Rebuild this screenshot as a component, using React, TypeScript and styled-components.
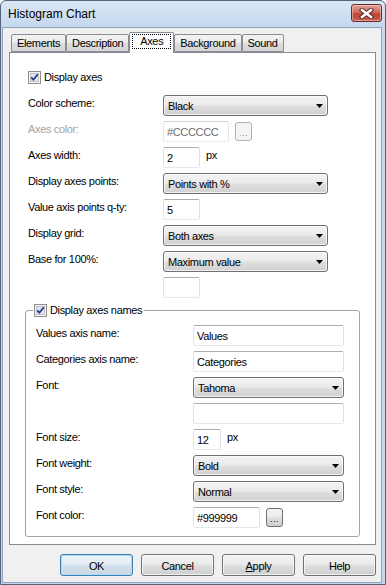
import React from 'react'
import styled, { createGlobalStyle } from 'styled-components'

const FONT = `'Liberation Sans', Arial, sans-serif`

const GlobalStyle = createGlobalStyle`
  html, body {
    margin: 0;
    padding: 0;
    background: #fff;
  }
  body {
    font-family: ${FONT};
    font-size: 11px;
    letter-spacing: -0.35px;
    color: #000;
  }
  * {
    box-sizing: border-box;
  }
`

type Field =
  | { kind: 'select'; label: string; value: string }
  | { kind: 'text'; label: string; value: string; width: number; unit?: string; browse?: boolean; disabled?: boolean }

const axesFields: Field[] = [
  { kind: 'select', label: 'Color scheme:', value: 'Black' },
  { kind: 'text', label: 'Axes color:', value: '#CCCCCC', width: 66, browse: true, disabled: true },
  { kind: 'text', label: 'Axes width:', value: '2', width: 37, unit: 'px' },
  { kind: 'select', label: 'Display axes points:', value: 'Points with %' },
  { kind: 'text', label: 'Value axis points q-ty:', value: '5', width: 37 },
  { kind: 'select', label: 'Display grid:', value: 'Both axes' },
  { kind: 'select', label: 'Base for 100%:', value: 'Maximum value' },
  { kind: 'text', label: '', value: '', width: 37 },
]

const nameFields: Field[] = [
  { kind: 'text', label: 'Values axis name:', value: 'Values', width: 151 },
  { kind: 'text', label: 'Categories axis name:', value: 'Categories', width: 151 },
  { kind: 'select', label: 'Font:', value: 'Tahoma' },
  { kind: 'text', label: '', value: '', width: 151 },
  { kind: 'text', label: 'Font size:', value: '12', width: 28, unit: 'px' },
  { kind: 'select', label: 'Font weight:', value: 'Bold' },
  { kind: 'select', label: 'Font style:', value: 'Normal' },
  { kind: 'text', label: 'Font color:', value: '#999999', width: 67, browse: true },
]

const tabs = ['Elements', 'Description', 'Axes', 'Background', 'Sound']

const WINDOW = styled.div`
  width: 386px;
  height: 585px;
  display: flex;
  flex-direction: column;
  padding: 0 3px 1px 1px;
  border: 1px solid #55647c;
  border-radius: 6px 6px 0 0;
  background: linear-gradient(#dae6f5, #c5d8ef 26px, #c3d6ee);
`

const TITLE_BAR = styled.div`
  height: 26px;
  flex: none;
  display: flex;
  align-items: center;
  justify-content: space-between;
  padding: 0 0 1px 6px;
`

const TITLE = styled.span`
  font-family: ${FONT};
  font-size: 12px;
  letter-spacing: 0;
  color: #000;
`

const CLOSE_BUTTON = styled.div`
  width: 31px;
  height: 18px;
  margin-top: -1px;
  display: flex;
  align-items: center;
  justify-content: center;
  border: 1px solid #6b2b28;
  border-radius: 3px;
  background: linear-gradient(#e3a59d, #cf6a5f 45%, #bd4536 55%, #c65d4f);
  box-shadow: inset 0 0 0 1px rgba(255, 210, 200, 0.55);
`

const CLIENT = styled.div`
  flex: 1;
  display: flex;
  flex-direction: column;
  padding: 4px 5px 6px 6px;
  border: 1px solid #8ea4c0;
  background: #f0f0f0;
`

const TAB_STRIP = styled.div`
  display: flex;
  align-items: flex-end;
  height: 20px;
  padding-left: 2px;
  position: relative;
  z-index: 1;
`

const TAB = styled.div<{ $active?: boolean }>`
  height: ${({ $active }) => ($active ? 21 : 18)}px;
  margin: ${({ $active }) => ($active ? '0 0 -1px 0' : '0')};
  padding: ${({ $active }) => ($active ? '1px 2px 0' : '0 5px')};
  border: 1px solid #898c95;
  border-bottom: ${({ $active }) => ($active ? 'none' : '1px solid #898c95')};
  border-radius: 2px 2px 0 0;
  background: ${({ $active }) => ($active ? '#fff' : 'linear-gradient(#f3f3f3, #ebebeb 50%, #dddddd 50%, #d6d6d6)')};
  line-height: 16px;
  white-space: nowrap;
`

const FOCUS_TEXT = styled.span`
  display: block;
  padding: 0 8px;
  line-height: 15px;
  outline: 1px dotted #000;
  outline-offset: -1px;
`

const PANEL = styled.div`
  flex: 1;
  display: flex;
  flex-direction: column;
  padding: 17px 15px 5px 15px;
  border: 1px solid #898c95;
  background: #fff;
`

const SECTION = styled.div`
  display: flex;
  flex-direction: column;
  padding-left: 3px;
`

const CHECK_ROW = styled.label`
  display: flex;
  align-items: center;
  gap: 3px;
  height: 14px;
  line-height: 14px;
  white-space: nowrap;
`

const ROWS = styled.div<{ $top: number }>`
  display: flex;
  flex-direction: column;
  gap: 5px;
  margin-top: ${({ $top }) => $top}px;
`

const ROW = styled.div<{ $labelWidth: number }>`
  display: grid;
  grid-template-columns: ${({ $labelWidth }) => $labelWidth}px 1fr;
  height: 21px;
`

const LABEL = styled.span<{ $disabled?: boolean }>`
  padding-top: 2px;
  line-height: 13px;
  white-space: nowrap;
  color: ${({ $disabled }) => ($disabled ? '#a3a3a3' : '#000')};
`

const CONTROL = styled.div`
  display: flex;
  align-items: center;
  gap: 6px;
`

const SELECT = styled.div<{ $width: number }>`
  width: ${({ $width }) => $width}px;
  height: 21px;
  display: flex;
  align-items: center;
  justify-content: space-between;
  padding: 1px 4px 0 4px;
  border: 1px solid #707070;
  border-radius: 3px;
  background: linear-gradient(#f3f3f3, #ebebeb 45%, #dedede 55%, #d0d0d0);
  box-shadow: inset 0 0 0 1px rgba(255, 255, 255, 0.7);
  line-height: 18px;
  white-space: nowrap;
`

const TEXT_BOX = styled.div<{ $width: number; $disabled?: boolean }>`
  width: ${({ $width }) => $width}px;
  height: 21px;
  padding: 1px 3px 0;
  border: 1px solid;
  border-color: ${({ $disabled }) =>
    $disabled ? '#d2d4d8 #e6e8ec #eceef1 #e6e8ec' : '#abadb3 #dbdfe6 #e3e9ef #e2e3ea'};
  border-radius: 2px;
  background: #fff;
  color: ${({ $disabled }) => ($disabled ? '#6d6d6d' : '#000')};
  line-height: 18px;
  white-space: nowrap;
`

const UNIT = styled.span`
  line-height: 13px;
  margin-top: -4px;
`

const BROWSE_BUTTON = styled.div<{ $disabled?: boolean }>`
  width: 17px;
  height: 19px;
  display: flex;
  align-items: flex-end;
  justify-content: center;
  padding-bottom: 3px;
  border: 1px solid ${({ $disabled }) => ($disabled ? '#b0b4b8' : '#707070')};
  border-radius: 3px;
  background: ${({ $disabled }) =>
    $disabled ? '#f4f4f4' : 'linear-gradient(#f3f3f3, #ebebeb 45%, #dddddd 55%, #cfcfcf)'};
  color: ${({ $disabled }) => ($disabled ? '#8d8d8d' : '#000')};
  font-size: 9px;
  line-height: 8px;
  letter-spacing: 0.5px;
`

const GROUP_BOX = styled.fieldset`
  margin: 5px 0 0 0;
  padding: 0 16px 8px 10px;
  min-inline-size: 0;
  border: 1px solid #a5a5a5;
  border-radius: 3px;
`

const LEGEND = styled.legend`
  margin-left: -3px;
  padding: 0 2px 0 1px;
`

const BUTTON_BAR = styled.div`
  display: flex;
  justify-content: flex-end;
  gap: 8px;
  margin-top: 9px;
`

const DIALOG_BUTTON = styled.div<{ $default?: boolean }>`
  width: 73px;
  height: 22px;
  display: flex;
  align-items: center;
  justify-content: center;
  border: 1px solid ${({ $default }) => ($default ? '#3c7fb1' : '#707070')};
  border-radius: 3px;
  background: ${({ $default }) =>
    $default
      ? 'linear-gradient(#eef4f8, #e4edf4 45%, #d3e0ea 55%, #c9d8e4)'
      : 'linear-gradient(#f3f3f3, #ebebeb 45%, #dddddd 55%, #cfcfcf)'};
  box-shadow: inset 0 0 0 1px ${({ $default }) => ($default ? '#a9dcf6' : 'rgba(255, 255, 255, 0.7)')};
  padding-top: 1px;
`

const CheckBox = () => (
  <svg width="13" height="13" viewBox="0 0 13 13">
    <rect x="0.5" y="0.5" width="12" height="12" fill="#f4f4f4" stroke="#8e8f8f" />
    <rect x="2.5" y="2.5" width="8" height="8" fill="#e2e4e8" stroke="#c3c7cd" />
    <path d="M3.2 6.3 L5.4 8.7 L9.8 3.2" fill="none" stroke="#263b8c" strokeWidth="1.8" />
  </svg>
)

const ArrowDown = () => (
  <svg width="7" height="4" viewBox="0 0 7 4">
    <polygon points="0,0 7,0 3.5,4" fill="#000" />
  </svg>
)

const CloseGlyph = () => (
  <svg width="15" height="11" viewBox="0 0 15 11">
    <path d="M3 2 L12 9 M12 2 L3 9" stroke="#5a2a26" strokeWidth="4.4" strokeLinecap="square" />
    <path d="M3 2 L12 9 M12 2 L3 9" stroke="#fff" strokeWidth="2.4" strokeLinecap="square" />
  </svg>
)

const FieldRow = ({ field, labelWidth, selectWidth }: { field: Field; labelWidth: number; selectWidth: number }) => {
  const disabled = field.kind === 'text' && field.disabled
  return (
    <ROW $labelWidth={labelWidth}>
      <LABEL $disabled={disabled}>{field.label}</LABEL>
      <CONTROL>
        {field.kind === 'select' ? (
          <SELECT $width={selectWidth}>
            <span>{field.value}</span>
            <ArrowDown />
          </SELECT>
        ) : (
          <>
            <TEXT_BOX $width={field.width} $disabled={disabled}>
              {field.value}
            </TEXT_BOX>
            {field.unit && <UNIT>{field.unit}</UNIT>}
            {field.browse && <BROWSE_BUTTON $disabled={disabled}>...</BROWSE_BUTTON>}
          </>
        )}
      </CONTROL>
    </ROW>
  )
}

export default function App() {
  return (
    <>
      <GlobalStyle />
      <WINDOW>
        <TITLE_BAR>
          <TITLE>Histogram Chart</TITLE>
          <CLOSE_BUTTON>
            <CloseGlyph />
          </CLOSE_BUTTON>
        </TITLE_BAR>
        <CLIENT>
          <TAB_STRIP>
            {tabs.map((t) => (
              <TAB key={t} $active={t === 'Axes'}>
                {t === 'Axes' ? <FOCUS_TEXT>{t}</FOCUS_TEXT> : t}
              </TAB>
            ))}
          </TAB_STRIP>
          <PANEL>
            <SECTION>
              <CHECK_ROW>
                <CheckBox />
                Display axes
              </CHECK_ROW>
              <ROWS $top={11}>
                {axesFields.map((f, i) => (
                  <FieldRow key={i} field={f} labelWidth={135} selectWidth={165} />
                ))}
              </ROWS>
            </SECTION>
            <GROUP_BOX>
              <LEGEND>
                <CHECK_ROW>
                  <CheckBox />
                  Display axes names
                </CHECK_ROW>
              </LEGEND>
              <ROWS $top={8}>
                {nameFields.map((f, i) => (
                  <FieldRow key={i} field={f} labelWidth={157} selectWidth={151} />
                ))}
              </ROWS>
            </GROUP_BOX>
          </PANEL>
          <BUTTON_BAR>
            <DIALOG_BUTTON $default>OK</DIALOG_BUTTON>
            <DIALOG_BUTTON>Cancel</DIALOG_BUTTON>
            <DIALOG_BUTTON>
              <span>
                <u>A</u>pply
              </span>
            </DIALOG_BUTTON>
            <DIALOG_BUTTON>Help</DIALOG_BUTTON>
          </BUTTON_BAR>
        </CLIENT>
      </WINDOW>
    </>
  )
}
